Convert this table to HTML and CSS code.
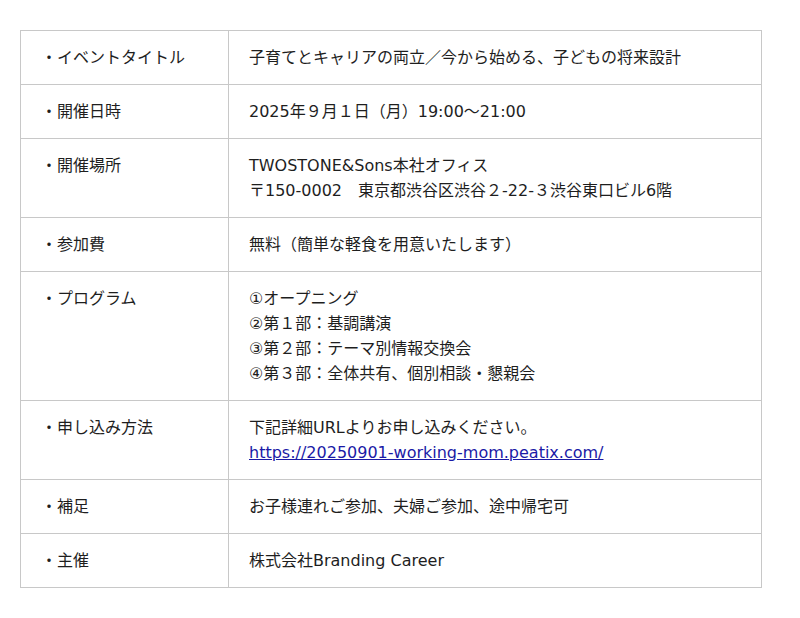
FILE: index.html
```html
<!DOCTYPE html>
<html lang="ja">
<head>
<meta charset="utf-8">
<link rel="stylesheet" href="styles.css">
</head>
<body>
<div class="wrap">
<table class="info">
<tr><th>・イベントタイトル</th><td>子育てとキャリアの両立／今から始める、子どもの将来設計</td></tr>
<tr><th>・開催日時</th><td>2025年９月１日（月）19:00〜21:00</td></tr>
<tr><th>・開催場所</th><td>TWOSTONE&amp;Sons本社オフィス<br>〒150-0002　東京都渋谷区渋谷２-22-３渋谷東口ビル6階</td></tr>
<tr><th>・参加費</th><td>無料（簡単な軽食を用意いたします）</td></tr>
<tr><th>・プログラム</th><td>①オープニング<br>②第１部：基調講演<br>③第２部：テーマ別情報交換会<br>④第３部：全体共有、個別相談・懇親会</td></tr>
<tr><th>・申し込み方法</th><td>下記詳細URLよりお申し込みください。<br><a href="#">https://20250901-working-mom.peatix.com/</a></td></tr>
<tr><th>・補足</th><td>お子様連れご参加、夫婦ご参加、途中帰宅可</td></tr>
<tr><th>・主催</th><td>株式会社Branding Career</td></tr>
</table>
</div>
</body>
</html>
```
FILE: styles.css
```css
html, body { margin: 0; padding: 0; background: #fff; }
body {
  font-family: "DejaVu Sans", "Noto Sans CJK JP", sans-serif;
  font-size: 16px;
  color: #1e1e1e;
}
.wrap { padding: 30px 20px; }
.info {
  width: 742px;
  border-collapse: collapse;
  border: 1px solid #ddd;
}
.info th, .info td {
  border: 1px solid #c8c8c8;
  padding: 14px 20px;
  line-height: 25px;
  text-align: left;
  vertical-align: top;
  font-weight: normal;
}
.info th { width: 167px; }
.info a { color: #1a1aa6; text-decoration: underline; }
```
